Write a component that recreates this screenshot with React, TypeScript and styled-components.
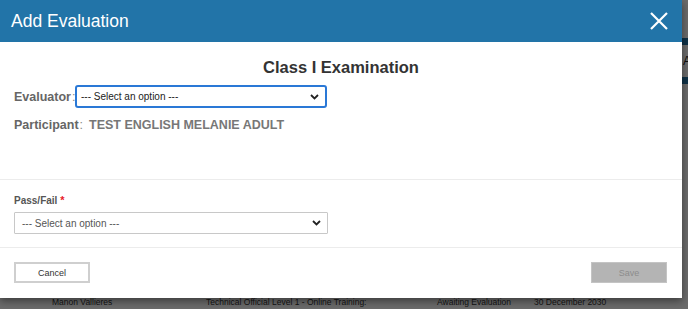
import React, { FC } from 'react'
import styled, { createGlobalStyle } from 'styled-components'

const GlobalStyle = createGlobalStyle`
  html, body {
    margin: 0;
    padding: 0;
    background: #fff;
    font-family: "Liberation Sans", Arial, sans-serif;
  }
`

const Page = styled.div`
  position: relative;
  width: 688px;
  height: 309px;
  overflow: hidden;
  background: #fff;
`

const BgBar = styled.div<{ $top: number }>`
  margin-top: ${p => p.$top}px;
  height: 7px;
  background: #2274a8;
`

const BgHeadRow = styled.div`
  height: 32px;
  display: flex;
  align-items: center;
  padding-left: 683px;
  font-size: 12px;
  color: #222;
  white-space: nowrap;
`

const BgRow = styled.div`
  margin-top: 212px;
  display: flex;
  align-items: center;
  height: 12px;
  font-size: 8.5px;
  color: #333;
  white-space: nowrap;
`

const BgCell = styled.span<{ $w: number }>`
  width: ${p => p.$w}px;
  flex: none;
`

const Backdrop = styled.div`
  position: absolute;
  inset: 0;
  background: rgba(0, 0, 0, 0.58);
`

const Modal = styled.div`
  position: absolute;
  top: 0;
  left: 0;
  width: 682px;
  height: 298px;
  background: #fff;
  box-shadow: 0 3px 8px rgba(0, 0, 0, 0.45);
  display: flex;
  flex-direction: column;
`

const Header = styled.div`
  height: 42px;
  flex: none;
  background: #2274a8;
  display: flex;
  align-items: center;
  justify-content: space-between;
  padding: 0 13px 0 11px;
  box-sizing: border-box;
`

const HeaderTitle = styled.h1`
  margin: 0;
  font-size: 17.5px;
  font-weight: normal;
  color: #fff;
`

const CloseButton = styled.button`
  border: 0;
  background: none;
  padding: 0;
  width: 20px;
  height: 20px;
  display: flex;
  cursor: pointer;
`

const Body = styled.div`
  padding: 16px 14px 0;
  height: 138px;
  box-sizing: border-box;
  border-bottom: 1px solid #ececec;
`

const ExamTitle = styled.h2`
  margin: 0 0 8px;
  text-align: center;
  font-size: 16.5px;
  font-weight: bold;
  color: #333;
  line-height: 19px;
`

const InfoRow = styled.div`
  display: flex;
  align-items: center;
  height: 23px;
  margin-bottom: 5px;
  font-size: 12.5px;
  font-weight: bold;
  color: #666;
`

const InfoLabel = styled.span<{ $width: number }>`
  width: ${p => p.$width}px;
  flex: none;
  white-space: nowrap;
`

const Colon = styled.span`
  font-weight: normal;
  color: #888;
  margin-left: 1px;
`

const InfoValue = styled.span`
  color: #777;
`

const SelectBox = styled.div<{ $focused?: boolean; $width: number }>`
  width: ${p => p.$width}px;
  height: ${p => (p.$focused ? 23 : 22)}px;
  box-sizing: border-box;
  border: ${p => (p.$focused ? '2px solid #2a78d6' : '1px solid #c8c8c8')};
  border-radius: ${p => (p.$focused ? 3 : 1)}px;
  display: flex;
  align-items: center;
  justify-content: space-between;
  padding: 0 6px 0 ${p => (p.$focused ? 4 : 7)}px;
  font-size: 10px;
  font-weight: normal;
  color: ${p => (p.$focused ? '#222' : '#555')};
  background: #fff;
`

const Section = styled.div`
  padding: 14px 14px 0;
  height: 68px;
  box-sizing: border-box;
  border-bottom: 1px solid #ececec;
`

const FieldLabel = styled.div`
  font-size: 10px;
  font-weight: bold;
  color: #555;
  margin-bottom: 5px;
  line-height: 13px;
`

const Required = styled.span`
  color: #e8202a;
  margin-left: 3px;
  font-size: 11px;
`

const Footer = styled.div`
  flex: 1;
  display: flex;
  align-items: flex-start;
  justify-content: space-between;
  padding: 14px 15px 0 14px;
`

const Button = styled.button<{ $disabled?: boolean }>`
  width: 76px;
  height: 21px;
  box-sizing: border-box;
  font-family: "Liberation Sans", Arial, sans-serif;
  font-size: 9px;
  border: ${p => (p.$disabled ? '1px solid #c4c4c4' : '2px solid #cfcfcf')};
  background: ${p => (p.$disabled ? '#b4b4b4' : '#fff')};
  color: ${p => (p.$disabled ? '#8c8c8c' : '#333')};
  padding: 0;
  cursor: pointer;
`

const Chevron: FC = () => (
  <svg width="9" height="6" viewBox="0 0 9 6">
    <path d="M1 1 L4.5 4.5 L8 1" fill="none" stroke="#222" strokeWidth="1.8" />
  </svg>
)

const App: FC = () => {
  return (
    <Page>
      <GlobalStyle />
      <BgBar $top={38} />
      <BgHeadRow>Actions</BgHeadRow>
      <BgBar $top={0} />
      <BgRow>
        <BgCell $w={52} />
        <BgCell $w={154}>Manon Vallieres</BgCell>
        <BgCell $w={231}>Technical Official Level 1 - Online Training:</BgCell>
        <BgCell $w={97}>Awaiting Evaluation</BgCell>
        <BgCell $w={120}>30 December 2030</BgCell>
      </BgRow>
      <Backdrop />
      <Modal>
        <Header>
          <HeaderTitle>Add Evaluation</HeaderTitle>
          <CloseButton aria-label="Close">
            <svg width="20" height="20" viewBox="0 0 20 20">
              <path d="M2 2 L18 18 M18 2 L2 18" stroke="#fff" strokeWidth="2.2" fill="none" />
            </svg>
          </CloseButton>
        </Header>
        <Body>
          <ExamTitle>Class I Examination</ExamTitle>
          <InfoRow>
            <InfoLabel $width={61}>Evaluator<Colon>:</Colon></InfoLabel>
            <SelectBox $focused $width={252}>
              --- Select an option ---
              <Chevron />
            </SelectBox>
          </InfoRow>
          <InfoRow>
            <InfoLabel $width={75}>Participant<Colon>:</Colon></InfoLabel>
            <InfoValue>TEST ENGLISH MELANIE ADULT</InfoValue>
          </InfoRow>
        </Body>
        <Section>
          <FieldLabel>Pass/Fail<Required>*</Required></FieldLabel>
          <SelectBox $width={314}>
            --- Select an option ---
            <Chevron />
          </SelectBox>
        </Section>
        <Footer>
          <Button>Cancel</Button>
          <Button $disabled>Save</Button>
        </Footer>
      </Modal>
    </Page>
  )
}

export default App
